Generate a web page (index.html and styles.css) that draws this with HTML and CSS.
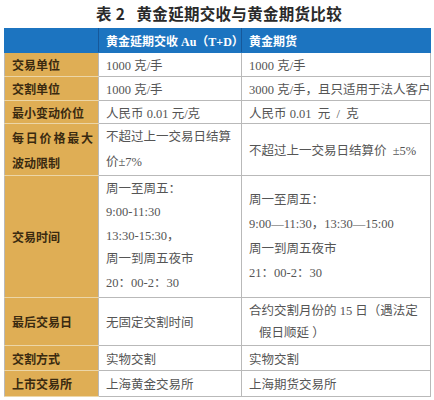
FILE: index.html
```html
<!DOCTYPE html>
<html lang="zh">
<head>
<meta charset="utf-8">
<link rel="stylesheet" href="styles.css">
</head>
<body>
<div class="page">
  <h1 class="title">表 2&nbsp;&nbsp;&nbsp;黄金延期交收与黄金期货比较</h1>
  <table class="cmp">
    <colgroup>
      <col class="c1"><col class="c2"><col class="c3">
    </colgroup>
    <thead>
      <tr class="h-row">
        <th></th>
        <th>黄金延期交收 Au（T+D）</th>
        <th>黄金期货</th>
      </tr>
    </thead>
    <tbody>
      <tr class="r1">
        <th>交易单位</th>
        <td>1000 克/手</td>
        <td>1000 克/手</td>
      </tr>
      <tr class="r1">
        <th>交割单位</th>
        <td>1000 克/手</td>
        <td>3000 克/手，且只适用于法人客户</td>
      </tr>
      <tr class="r3">
        <th>最小变动价位</th>
        <td>人民币 0.01 元/克</td>
        <td>人民币 0.01&nbsp; 元&nbsp; /&nbsp; 克</td>
      </tr>
      <tr class="r4">
        <th><div class="just">每日价格最大</div><div class="ln">波动限制</div></th>
        <td><div class="ln">不超过上一交易日结算</div><div class="ln">价±7%</div></td>
        <td>不超过上一交易日结算价&nbsp; ±5%</td>
      </tr>
      <tr class="r5">
        <th>交易时间</th>
        <td class="multi">
          <div>周一至周五：</div>
          <div>9:00-11:30</div>
          <div>13:30-15:30，</div>
          <div>周一到周五夜市</div>
          <div>20：00-2：30</div>
        </td>
        <td class="multi wide">
          <div>周一至周五：</div>
          <div>9:00—11:30，13:30—15:00</div>
          <div>周一到周五夜市</div>
          <div>21：00-2：30</div>
        </td>
      </tr>
      <tr class="r6">
        <th>最后交易日</th>
        <td>无固定交割时间</td>
        <td class="last"><div>合约交割月份的 15 日（遇法定</div><div class="ind">假日顺延 ）</div></td>
      </tr>
      <tr class="r7">
        <th>交割方式</th>
        <td>实物交割</td>
        <td>实物交割</td>
      </tr>
      <tr class="r8">
        <th>上市交易所</th>
        <td>上海黄金交易所</td>
        <td>上海期货交易所</td>
      </tr>
    </tbody>
  </table>
</div>
</body>
</html>
```
FILE: styles.css
```css
html, body {
  margin: 0;
  padding: 0;
  background: #ffffff;
}
.page {
  width: 434px;
  height: 400px;
  padding: 0 4px;
  box-sizing: border-box;
  font-family: "Liberation Serif", "Noto Sans CJK SC", serif;
}
.title {
  margin: 0;
  height: 28px;
  line-height: 26px;
  text-align: center;
  font-family: "Noto Sans CJK SC", sans-serif;
  font-size: 15.5px;
  font-weight: 700;
  color: #2a2a2a;
  letter-spacing: 0.3px;
  padding-left: 4px;
}
.cmp {
  border-collapse: collapse;
  width: 426px;
  table-layout: fixed;
  font-size: 12.5px;
  color: #555555;
}
.c1 { width: 94px; }
.c2 { width: 143px; }
.c3 { width: 189px; }
.cmp th, .cmp td {
  border: 1px solid #b9b9b9;
  padding: 0 0 0 7px;
  vertical-align: middle;
  text-align: left;
  white-space: nowrap;
}
.cmp tbody th {
  background: #dfae55;
  color: #3a2a10;
  font-family: "Noto Sans CJK SC", sans-serif;
  font-weight: 700;
  font-size: 12px;
  border-color: #ecd6a8;
  border-left-color: #b9b9b9;
  border-right-color: #b9b9b9;
}
.cmp thead th {
  background: #1c74c0;
  color: #ffffff;
  font-weight: 700;
  font-size: 12px;
  height: 23px;
  border-color: #1c74c0;
  border-right: 1px solid #16589a;
  border-top: 1px solid #1c74c0;
}
.cmp thead th:last-child { border-right-color: #1c74c0; }
.r1 th, .r1 td { height: 23px; }
.r3 th, .r3 td { height: 22px; }
.r4 th, .r4 td { height: 51px; }
.r5 th, .r5 td { height: 121px; }
.r6 th, .r6 td { height: 47px; }
.r7 th, .r7 td { height: 24px; }
.r8 th, .r8 td { height: 25px; }
.cmp tbody td {
  font-family: "Liberation Serif", "Noto Sans CJK SC", serif;
}
.ln { line-height: 25px; }
.just {
  line-height: 25px;
  width: 81px;
  text-align: justify;
  text-align-last: justify;
}
.multi div { line-height: 23.5px; }
.multi.wide div { line-height: 24.5px; }
.last div { line-height: 22px; }
.last .ind { padding-left: 10px; }
```
